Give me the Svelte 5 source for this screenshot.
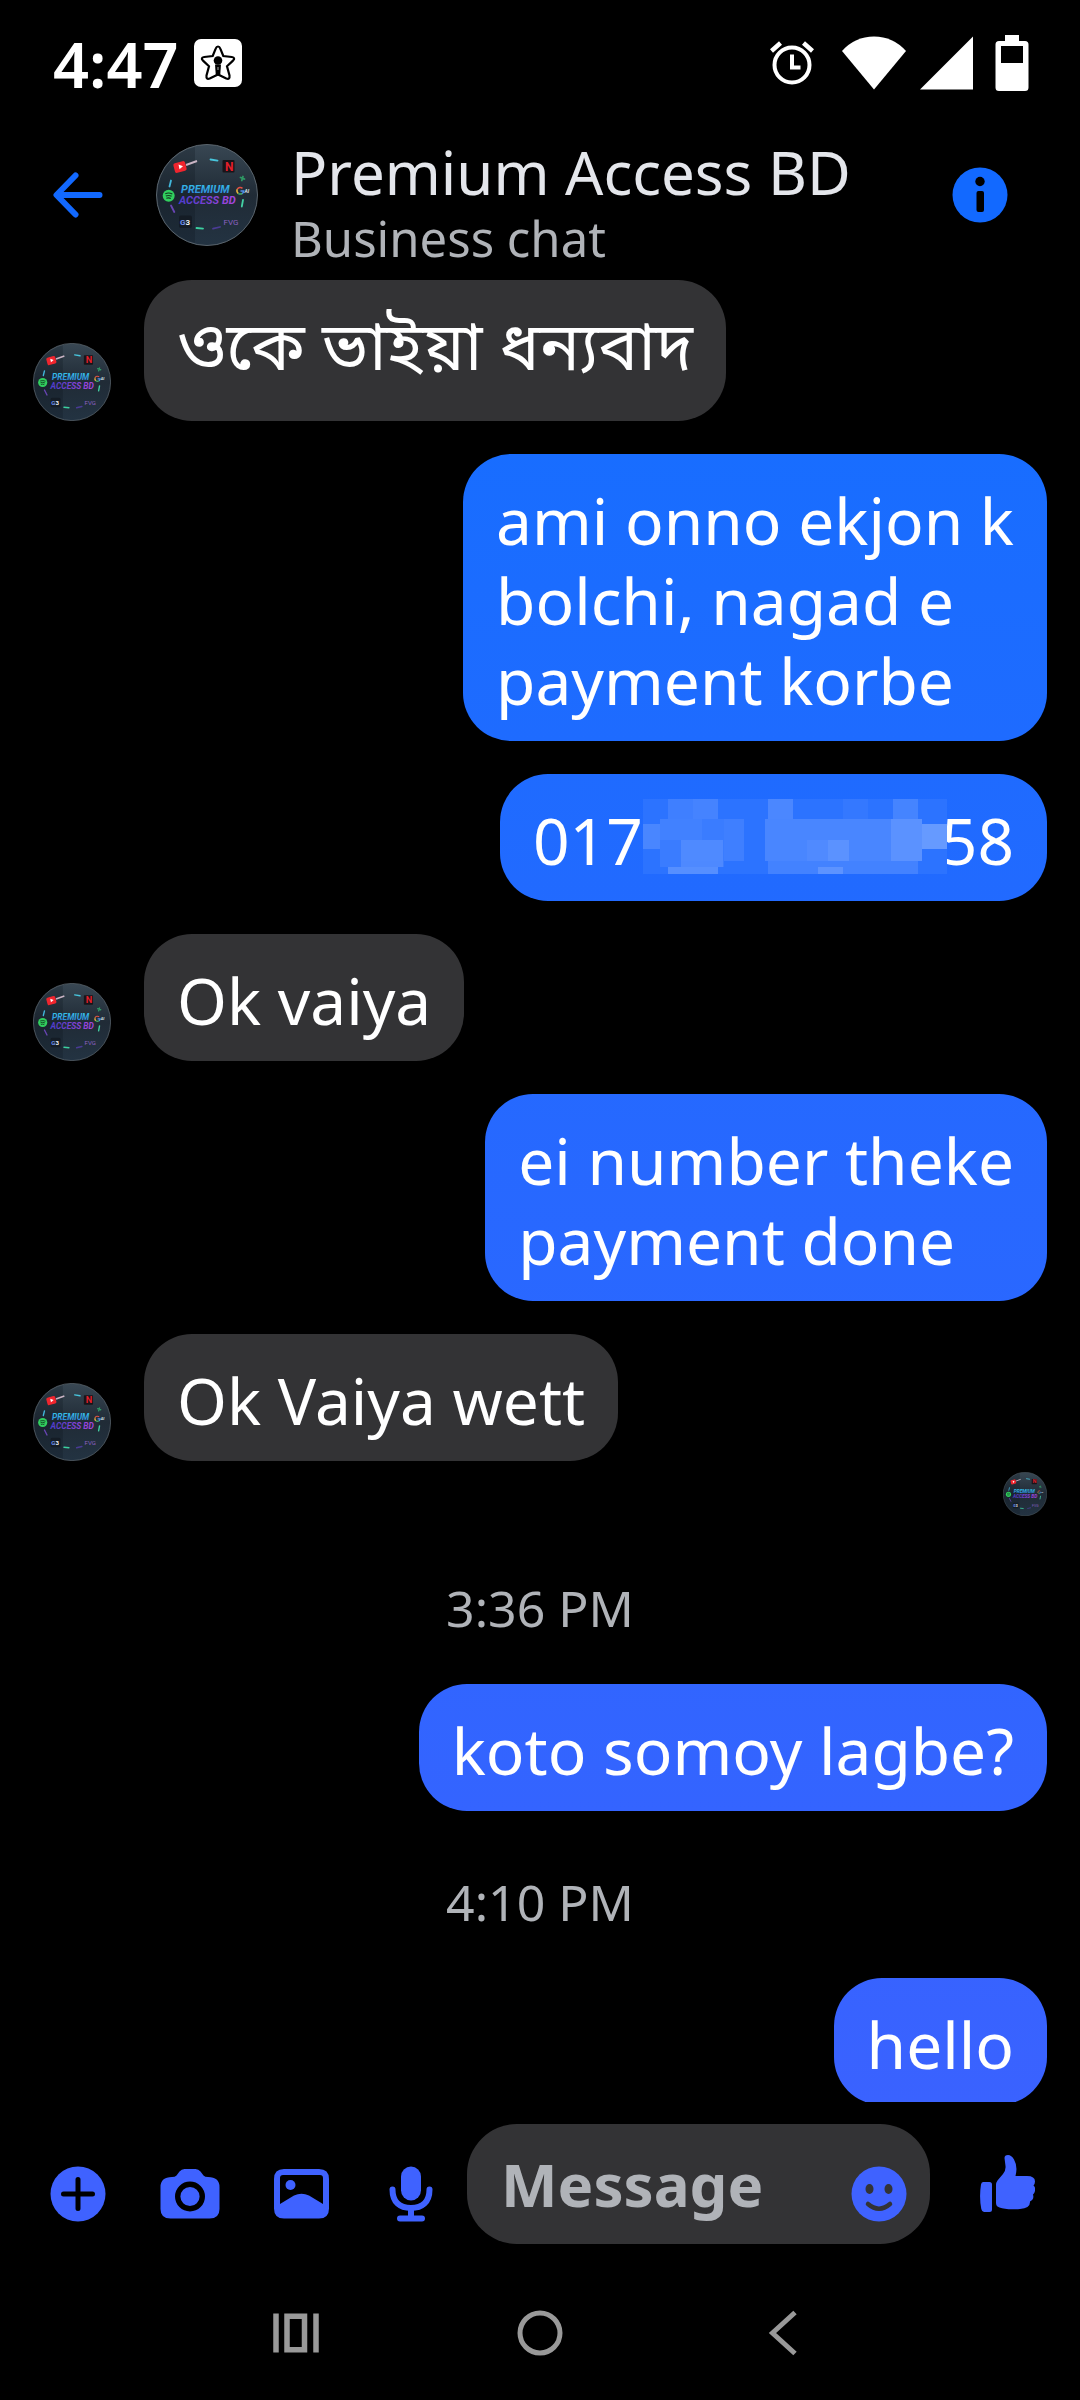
<script lang="ts">
	type Message = {
		kind: 'in' | 'out' | 'time' | 'seen' | 'hidden';
		text?: string;
		lang?: string;
	};

	const messages: Message[] = [
		{ kind: 'in', text: 'ওকে ভাইয়া ধন্যবাদ', lang: 'bn' },
		{ kind: 'out', text: 'ami onno ekjon k\nbolchi, nagad e\npayment korbe' },
		{ kind: 'hidden' },
		{ kind: 'in', text: 'Ok vaiya' },
		{ kind: 'out', text: 'ei number theke\npayment done' },
		{ kind: 'in', text: 'Ok Vaiya wett' },
		{ kind: 'seen' },
		{ kind: 'time', text: '3:36 PM' },
		{ kind: 'out', text: 'koto somoy lagbe?' },
		{ kind: 'time', text: '4:10 PM' },
		{ kind: 'out', text: 'hello' }
	];

	// x, y, width, height, white opacity
	const mosaic = [
		[0, 0, 304, 75, 0.07],
		[25, 0, 50, 20, 0.09],
		[50, 0, 25, 20, 0.03],
		[125, 0, 25, 20, 0.15],
		[200, 0, 25, 20, 0.04],
		[250, 0, 25, 20, 0.12],
		[0, 25, 17, 25, 0.14],
		[17, 20, 64, 48, 0.07],
		[17, 20, 42, 21, 0.04],
		[81, 20, 20, 42, 0.09],
		[38, 41, 42, 21, 0.11],
		[38, 62, 42, 6, 0.1],
		[25, 68, 50, 7, 0.2],
		[122, 20, 157, 42, 0.14],
		[164, 41, 21, 21, 0.04],
		[185, 41, 21, 21, 0.1],
		[125, 62, 150, 13, 0.11],
		[175, 68, 25, 7, 0.14],
		[248, 20, 31, 42, 0.1],
		[279, 25, 25, 25, 0.28]
	];

	let draft = $state('');
</script>

{#snippet avatar(size: string)}
	<svg class="avatar {size}" viewBox="0 0 102 102" aria-hidden="true"><use href="#avatar" /></svg>
{/snippet}

<svg class="defs" width="0" height="0" aria-hidden="true">
	<defs>
		<linearGradient id="disc" x1="0" y1="0" x2="0" y2="1">
			<stop offset="0" stop-color="#384753" />
			<stop offset="0.5" stop-color="#202b36" />
			<stop offset="1" stop-color="#233342" />
		</linearGradient>
		<linearGradient id="word1" x1="0" y1="0" x2="0" y2="1">
			<stop offset="0" stop-color="#35c5e8" />
			<stop offset="1" stop-color="#2f83dd" />
		</linearGradient>
		<linearGradient id="word2" x1="0" y1="0" x2="1" y2="0">
			<stop offset="0" stop-color="#4a3ccc" />
			<stop offset="1" stop-color="#a845dd" />
		</linearGradient>
	</defs>
	<symbol id="avatar" viewBox="0 0 102 102">
		<circle cx="51" cy="51" r="50.5" fill="url(#disc)" stroke="#5a646c" />
		<path d="M1.5 51A49.500 49.500 0 0 1 39 3V99A49.500 49.500 0 0 1 1.500 51Z" fill="#0d141c" opacity="0.25" />
		<path d="M30 21l11-4" stroke="#c9b4c4" stroke-width="2" />
		<rect x="18" y="18" width="12" height="10" rx="2" fill="#f0252e" transform="rotate(-15 24 23)" />
		<path d="M22.500 20.500l4.500 1.800-3.500 3z" fill="#fff" />
		<rect x="66.500" y="16" width="12" height="12.500" rx="1" fill="#191419" />
		<text class="logo plain" x="69" y="26.500" font-size="12" fill="#e31f2b">N</text>
		<g fill="none" stroke-width="1.800" stroke-linecap="round">
			<path d="M54.500 15.500l7 1.200" stroke="#48c5dc" />
			<path d="M15 36.500l-1.500 6" stroke="#42b8dc" />
			<path d="M87 56l-1.200 6.500" stroke="#43d0a4" />
			<path d="M15 61.500l3.300 6.500" stroke="#6845b4" />
			<path d="M40.500 84l6.500 0.700" stroke="#3cd0a0" />
			<path d="M57 84.700l7-1.700" stroke="#4a3b94" />
			<path d="M84.500 33.500l4 1.500M87 32.500l-1.200 4" stroke="#2f9864" />
		</g>
		<circle cx="12.700" cy="51.700" r="6" fill="#31cf5e" />
		<path d="M9.300 49.700q3.500-1.500 7 0.300M9.800 52q3-1.200 5.800 0.200M10.300 54.200q2.500-0.800 4.500 0.200" fill="none" stroke="#12391f" stroke-width="1.100" />
		<g fill="none" stroke-width="1.500">
			<path d="M86.500 44.300a3.500 3.500 0 0 0-5.300 1" stroke="#e45045" />
			<path d="M81.200 45.300a3.500 3.500 0 0 0 1 4" stroke="#e8b53b" />
			<path d="M82.200 49.300a3.500 3.500 0 0 0 4 .2" stroke="#46aa68" />
			<path d="M84.500 47h3.200a3.500 3.500 0 0 1-1.500 2.600" stroke="#5190ee" />
		</g>
		<text class="logo" x="88.500" y="48.500" font-size="5" fill="#dfe4e8">AI</text>
		<text class="logo" x="25" y="48.500" font-size="11" fill="url(#word1)">PREMIUM</text>
		<text class="logo" x="23" y="59.500" font-size="11" fill="url(#word2)">ACCESS BD</text>
		<rect x="23" y="71.500" width="13" height="12.500" rx="2" fill="#141c25" />
		<text class="logo plain" x="24" y="80.500" font-size="8" fill="#6d92ef">G<tspan fill="#f0f2f4">3</tspan></text>
		<text class="logo plain thin" x="67.500" y="81" font-size="8" fill="#8a60c0">FVG</text>
	</symbol>
</svg>

<div class="screen">
	<div class="status">
		<span class="clock">4:47</span>
		<svg width="48" height="48" viewBox="0 0 48 48" aria-hidden="true">
			<rect width="48" height="48" rx="7" fill="#fff" />
			<path d="M24 7.500q1.500 0 2.300 2.200l3 7.300 8.500 1q4 .7 1.200 3.600l-6 5.700 2.500 9.200q.5 4.500-3.200 3L24 35.500l-8.300 4q-3.700 1.500-3.200-3L15 27.300l-6-5.700q-2.800-2.900 1.200-3.600l8.500-1 3-7.300Q22.500 7.500 24 7.500Z" fill="none" stroke="#000" stroke-width="2.200" />
			<circle cx="24" cy="21.500" r="4.300" />
			<path d="M21 25.500h6l-.8 11h-4.400z" />
			<path d="M24 28v3" stroke="#aaa" />
		</svg>
		<span class="spacer"></span>
		<svg class="alarm" width="44" height="44" viewBox="0 0 44 44" aria-hidden="true">
			<circle cx="22" cy="24" r="17.500" fill="none" stroke="#fff" stroke-width="4" />
			<path d="M22 13.500v13h8.500" fill="none" stroke="#fff" stroke-width="4" />
			<path d="M1.500 10l9-8M42.500 10l-9-8" stroke="#fff" stroke-width="4.500" />
		</svg>
		<svg class="wifi" width="64" height="54" viewBox="0 0 64 54" aria-hidden="true">
			<path d="M0 15Q13 .5 32 .5T64 15L32 53.500Z" fill="#fff" />
		</svg>
		<svg class="signal" width="53" height="54" viewBox="0 0 53 54" aria-hidden="true">
			<path d="M53 .5V53.500H0Z" fill="#fff" />
		</svg>
		<svg width="34" height="56" viewBox="0 0 34 56" aria-hidden="true">
			<path d="M10 0h14v6h6q3.500 0 3.500 3.500v43q0 3.500-3.500 3.500H4Q.5 56 .5 52.500v-43Q.5 6 4 6h6zM6 11v17h22V11z" fill="#fff" fill-rule="evenodd" />
		</svg>
	</div>

	<header>
		<button class="back" aria-label="Back">
			<svg width="50" height="46" viewBox="0 0 50 46">
				<path d="M22.500 3.500L3.500 23l19 19.500M4 23h42.500" fill="none" stroke="#1269ff" stroke-width="6" stroke-linecap="round" stroke-linejoin="round" />
			</svg>
		</button>
		{@render avatar('large')}
		<div class="who">
			<h1>Premium Access BD</h1>
			<p>Business chat</p>
		</div>
		<button aria-label="Chat details">
			<svg width="56" height="56" viewBox="0 0 56 56">
				<circle cx="28" cy="28" r="27.500" fill="#1269ff" />
				<circle cx="28" cy="14.500" r="4.700" />
				<rect x="24.500" y="24" width="7.500" height="21" rx="2" />
			</svg>
		</button>
	</header>

	<main>
		{#each messages as m}
			{#if m.kind === 'time'}
				<time>{m.text}</time>
			{:else if m.kind === 'seen'}
				<div class="seen">{@render avatar('small')}</div>
			{:else if m.kind === 'in'}
				<div class="row">
					{@render avatar('medium')}
					<p class="bubble" lang={m.lang}>{m.text}</p>
				</div>
			{:else if m.kind === 'hidden'}
				<div class="row out">
					<p class="bubble number">
						<span>017</span>
						<svg width="304" height="75" viewBox="0 0 304 75" aria-hidden="true">
							<rect width="304" height="75" fill="#1d69ff" />
							{#each mosaic as [x, y, w, h, a]}
								<rect {x} {y} width={w} height={h} fill="#fff" fill-opacity={a} />
							{/each}
						</svg>
						<span>58</span>
					</p>
				</div>
			{:else}
				<div class="row out">
					<p class="bubble">{m.text}</p>
				</div>
			{/if}
		{/each}
	</main>

	<form class="composer" onsubmit={(e) => e.preventDefault()}>
		<div class="tools">
			<button type="button" aria-label="More">
				<svg width="56" height="56" viewBox="0 0 56 56">
					<circle cx="28" cy="28" r="27.500" fill="#3f62ff" />
					<path d="M28 13.500v29M13.500 28h29" stroke="#000" stroke-width="5" stroke-linecap="round" />
				</svg>
			</button>
			<button type="button" aria-label="Camera">
				<svg width="60" height="56" viewBox="0 0 60 56">
					<path d="M24.500 3h11q3 0 5 2.500l3 4Q45 11 48 11q11.500 0 11.500 10v22q0 9.500-10 9.500h-39Q.5 52.500.5 43V21Q.5 11 12 11q3 0 4.500-1.500l3-4Q21.500 3 24.500 3Z" fill="#3f62ff" />
					<circle cx="30" cy="30.500" r="12.300" fill="none" stroke="#000" stroke-width="5.400" />
				</svg>
			</button>
			<button type="button" aria-label="Gallery">
				<svg width="55" height="56" viewBox="0 0 55 56">
					<path d="M10 3h35q10 0 10 10v29.500q0 10-10 10H10q-10 0-10-10V13Q0 3 10 3zM9 9Q6 9 6 12V38L20 29.500Q27.500 26 35 29.500L49 38V12q0-3-3-3z" fill="#3f62ff" fill-rule="evenodd" />
					<circle cx="16.500" cy="19" r="5" fill="#3f62ff" />
				</svg>
			</button>
			<button type="button" aria-label="Voice message">
				<svg width="56" height="56" viewBox="0 0 56 56">
					<rect x="18" y="0.500" width="20" height="34" rx="10" fill="#3f62ff" />
					<path d="M9.500 23.500c0 13 7.500 18.500 18.500 18.500s18.500-5.500 18.500-18.500M28 42v9M17 52.500h22" fill="none" stroke="#3f62ff" stroke-width="6" stroke-linecap="round" />
				</svg>
			</button>
		</div>
		<div class="field">
			<input type="text" placeholder="Message" aria-label="Message" bind:value={draft} />
			<button type="button" aria-label="Emoji">
				<svg width="56" height="56" viewBox="0 0 56 56">
					<circle cx="28" cy="28" r="27.500" fill="#3f62ff" />
					<ellipse cx="18.500" cy="23" rx="4" ry="5" fill="#333335" />
					<ellipse cx="37.500" cy="23" rx="4" ry="5" fill="#333335" />
					<path d="M17 38q11 9.500 22 0" fill="none" stroke="#333335" stroke-width="4.500" stroke-linecap="round" />
				</svg>
			</button>
		</div>
		<button type="button" aria-label="Like">
			<svg width="55" height="58" viewBox="0 0 55 58">
				<path d="M3 27h6.500q2.500 0 2.500 2.500v25q0 2.500-2.500 2.500H4q-2 0-2.700-3Q-1 42 1 29.500 1.400 27 3 27Z" fill="#3f62ff" />
				<path d="M28 0q3.500 0 6 4.500 4 7 1.500 16.500H47q8 0 8 5.500 0 2-1.500 4Q56 33 55 36q-.5 2-2 3.500 1.500 5-3 7 .5 7-10 7.500Q26 55 19.500 52.500 16 51.500 16 48V30q0-2.500 1.500-4.500l5.500-6.500q3-4 2.500-8L24.500 3Q24.500 0 28 0Z" fill="#3f62ff" />
			</svg>
		</button>
	</form>

	<nav>
		<button aria-label="Recent apps">
			<svg width="46" height="46" viewBox="0 0 46 46">
				<path d="M3 3.500v39M43 3.500v39M14 6.200h17.500v33.600H14z" fill="none" stroke="#999" stroke-width="5.500" />
			</svg>
		</button>
		<button aria-label="Home">
			<svg width="46" height="46" viewBox="0 0 46 46">
				<circle cx="23" cy="23" r="20" fill="none" stroke="#999" stroke-width="5" />
			</svg>
		</button>
		<button aria-label="Go back">
			<svg width="46" height="46" viewBox="0 0 46 46">
				<path d="M34 2.500L11.500 23 34 43.500" fill="none" stroke="#999" stroke-width="5" />
			</svg>
		</button>
	</nav>
</div>

<style>
	:global(body) {
		background: #000;
	}

	.defs {
		position: absolute;
	}

	.screen {
		display: flex;
		flex-direction: column;
		height: 100vh;
		overflow: hidden;
		background: #000;
		color: #fff;
		font-family: 'Noto Sans', 'Noto Sans Bengali', sans-serif;
	}

	svg {
		display: block;
		flex: none;
	}

	h1, p {
		margin: 0;
	}

	button {
		flex: none;
		padding: 0;
		border: 0;
		background: none;
	}

	.status {
		display: flex;
		align-items: center;
		height: 126px;
		padding: 0 51px 0 53px;
		box-sizing: border-box;
	}

	.clock {
		margin-right: 15px;
		font-size: 63px;
		font-weight: 600;
	}

	.spacer {
		flex: 1;
	}

	.alarm {
		margin-right: 28px;
	}

	.wifi {
		margin-right: 14px;
	}

	.signal {
		margin-right: 22px;
	}

	header {
		display: flex;
		align-items: center;
		height: 154px;
		padding: 0 72px 16px 53px;
		box-sizing: border-box;
	}

	.back {
		margin-right: 53px;
	}

	.who {
		flex: 1;
		margin-left: 33px;
		padding-top: 16px;
		white-space: nowrap;
	}

	h1 {
		color: #e4e6eb;
		font-size: 60px;
		font-weight: 400;
		line-height: 70px;
	}

	.who p {
		color: #b0b3b8;
		font-size: 49px;
		line-height: 62px;
	}

	.large {
		width: 102px;
		height: 102px;
	}

	.medium {
		width: 78px;
		height: 78px;
	}

	.small {
		width: 44px;
		height: 44px;
	}

	.logo {
		font-family: Roboto, sans-serif;
		font-style: italic;
		font-weight: 700;
	}

	.plain {
		font-style: normal;
	}

	.thin {
		font-weight: 400;
	}

	main {
		flex: 1;
		min-height: 0;
		padding: 0 33px;
		overflow: hidden;
	}

	.row {
		display: flex;
		align-items: flex-end;
		gap: 33px;
		margin-bottom: 33px;
	}

	.out {
		justify-content: flex-end;
	}

	.bubble {
		padding: 27px 33px 20px;
		border-radius: 48px;
		background: #333335;
		font-size: 64px;
		line-height: 80px;
		white-space: pre-line;
	}

	.bubble:lang(bn) {
		padding: 20px 33px 33px;
		font-size: 67px;
		line-height: 88px;
	}

	/* one gradient runs down the whole screen behind the sent bubbles */
	.out .bubble {
		background: linear-gradient(#0f70ff, #4060ff) fixed;
	}

	.number {
		display: flex;
	}

	.number svg {
		z-index: 1;
		margin: -2px -6px 0 0;
	}

	.seen {
		display: flex;
		justify-content: flex-end;
		margin-top: -22px;
	}

	time {
		display: block;
		padding: 59px 0 43px;
		color: #b0b3b8;
		font-size: 50px;
		line-height: 66px;
		text-align: center;
	}

	.row + time {
		padding-top: 25px;
	}

	.composer {
		display: flex;
		align-items: center;
		padding: 22px 45px 22px 50px;
	}

	.tools {
		display: flex;
		align-self: flex-end;
		gap: 54px;
		margin-bottom: 22px;
	}

	.field {
		display: flex;
		flex: 1;
		align-items: flex-end;
		min-width: 0;
		height: 120px;
		margin: 0 50px 0 28px;
		padding: 0 23px 22px 34px;
		border-radius: 50px;
		background: #333335;
		box-sizing: border-box;
	}

	input {
		flex: 1;
		min-width: 0;
		height: 76px;
		padding: 0;
		border: 0;
		outline: 0;
		background: none;
		color: #fff;
		font: 700 60px 'Noto Sans', sans-serif;
	}

	input::placeholder {
		color: #b0b3b8;
		opacity: 1;
	}

	nav {
		display: flex;
		justify-content: center;
		gap: 198px;
		padding: 44px 0 44px;
	}
</style>
